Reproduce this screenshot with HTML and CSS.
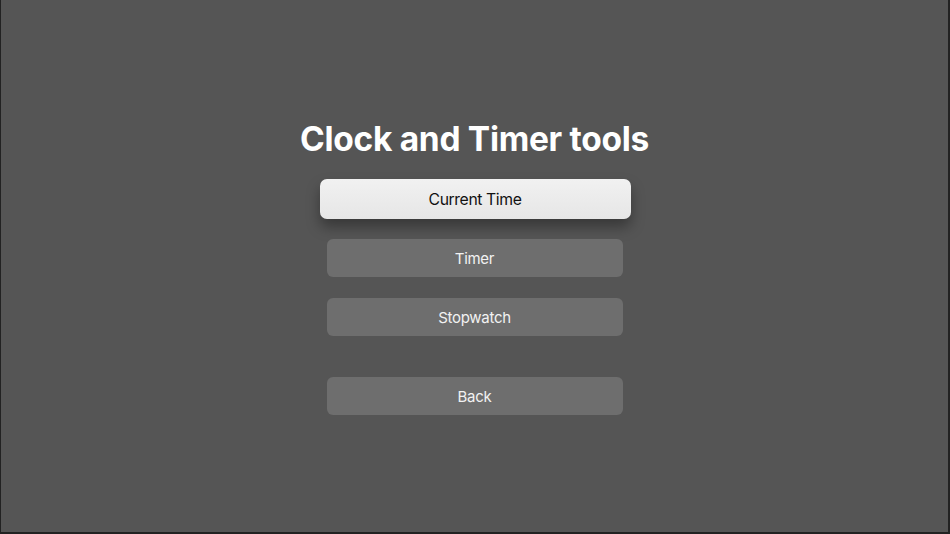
FILE: index.html
```html
<!DOCTYPE html>
<html>
<head>
<meta charset="utf-8">
<link rel="stylesheet" href="styles.css">
</head>
<body>
<div class="screen">
  <h1 class="title">Clock and Timer tools</h1>
  <div class="menu">
    <button class="btn btn-focused">Current Time</button>
    <button class="btn">Timer</button>
    <button class="btn">Stopwatch</button>
    <button class="btn btn-back">Back</button>
  </div>
</div>
</body>
</html>
```
FILE: styles.css
```css
html, body {
  margin: 0;
  padding: 0;
  background: #222222;
  width: 950px;
  height: 534px;
  overflow: hidden;
}
.screen {
  width: 947px;
  height: 532px;
  margin-left: 1px;
  background: #555555;
  display: flex;
  flex-direction: column;
  align-items: center;
  font-family: Inter, "Noto Sans", sans-serif;
  box-sizing: border-box;
  padding-top: 118px;
}
.title {
  margin: 0;
  font-size: 33.5px;
  line-height: 42px;
  font-weight: 700;
  color: #ffffff;
  letter-spacing: -0.3px;
}
.menu {
  display: flex;
  flex-direction: column;
  align-items: center;
  margin-top: 19px;
}
.btn {
  width: 296px;
  height: 38px;
  margin-top: 21px;
  border: none;
  border-radius: 6px;
  background: #6e6e6e;
  color: #f2f2f2;
  font-family: Inter, "Noto Sans", sans-serif;
  font-size: 15px;
  letter-spacing: -0.3px;
  padding: 0;
}
.btn-focused {
  width: 311px;
  height: 40px;
  margin-top: 0;
  margin-left: 1px;
  margin-bottom: -1px;
  border-radius: 7px;
  background: linear-gradient(#f1f1f1, #e6e6e6);
  color: #111111;
  font-size: 15.75px;
  letter-spacing: -0.4px;
  box-shadow: 0 8px 14px rgba(0, 0, 0, 0.35);
}
.btn-back {
  margin-top: 41px;
}
```
